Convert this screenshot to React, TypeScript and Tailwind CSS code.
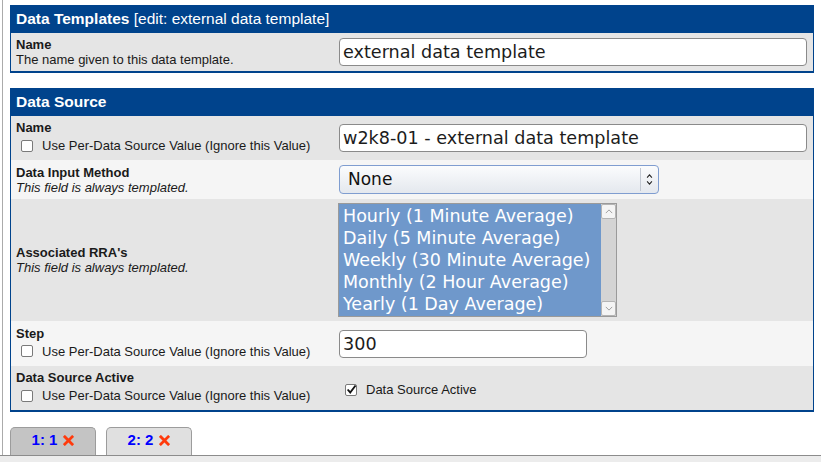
import React from "react";

const sans = "font-['Liberation_Sans',Arial,sans-serif]";
const deja = "font-['DejaVu_Sans',sans-serif]";

const Checkbox = ({ checked = false }: { checked?: boolean }) => (
  <span className="relative inline-block w-[12px] h-[12px] shrink-0 rounded-[2px] border border-[#7a7a7a] bg-white">
    {checked && (
      <svg
        viewBox="0 0 12 12"
        className="absolute left-[0px] top-[-1px] w-[11px] h-[11px]"
      >
        <path
          d="M1.8 6 L4.6 9.2 L10.4 1.6"
          fill="none"
          stroke="#111"
          strokeWidth="2"
        />
      </svg>
    )}
  </span>
);

const PerSource = () => (
  <div className="flex items-center h-[21px] pl-[5px] gap-[9px]">
    <Checkbox />
    <span>Use Per-Data Source Value (Ignore this Value)</span>
  </div>
);

const TextBox = ({ value, w }: { value: string; w: string }) => (
  <input
    readOnly
    defaultValue={value}
    className={`${w} ${deja} h-[28px] rounded-[4px] border border-[#8a8a8a] bg-white px-[3px] text-[17.6px] text-[#1c1c1c] outline-none`}
  />
);

const Header = ({ children }: { children: React.ReactNode }) => (
  <div className="h-[28px] bg-[#00438c] text-white text-[15.5px] pl-[5px] flex items-center">
    {children}
  </div>
);

const Row = ({
  h,
  light,
  label,
  children,
}: {
  h: string;
  light?: boolean;
  label: React.ReactNode;
  children: React.ReactNode;
}) => (
  <div className={`${h} flex items-center ${light ? "bg-[#f5f5f5]" : "bg-[#e5e5e5]"}`}>
    <div className="w-[328px] pl-[5px] leading-[15px]">{label}</div>
    <div className="flex-1 flex items-center">{children}</div>
  </div>
);

const Chevron = ({ up }: { up?: boolean }) => (
  <svg viewBox="0 0 10 6" className="w-[8px] h-[5px]">
    <path
      d={up ? "M1 5 L5 1 L9 5" : "M1 1 L5 5 L9 1"}
      fill="none"
      stroke="#8a8a8a"
      strokeWidth="1"
    />
  </svg>
);

const rras = [
  "Hourly (1 Minute Average)",
  "Daily (5 Minute Average)",
  "Weekly (30 Minute Average)",
  "Monthly (2 Hour Average)",
  "Yearly (1 Day Average)",
];

const RedX = () => (
  <svg viewBox="0 0 12 12" className="w-[11px] h-[11px]">
    <path d="M2 2 L10 10 M10 2 L2 10" stroke="#ff3a0c" strokeWidth="3" strokeLinecap="square" />
  </svg>
);

const Tab = ({ label, active }: { label: string; active?: boolean }) => (
  <div
    className={`w-[86px] h-[28px] rounded-t-[5px] border border-b-0 border-[#9c9c9c] flex items-center justify-center gap-[6px] pb-[2px] ${
      active ? "bg-[#c4c4c4]" : "bg-[#e0e0e0]"
    }`}
  >
    <span className="text-[15px] font-bold text-[#0000ff]">{label}</span>
    <RedX />
  </div>
);

export default function App() {
  return (
    <div className={`${sans} w-[821px] h-[462px] bg-white flex flex-col overflow-hidden text-[13px] text-[#1a1a1a]`}>
      <div className="h-[455px] ml-[2px] border-l border-[#ababab] pl-[7px] pt-[5px]">
        {/* Data template box */}
        <div className="w-[804px] border-x border-b-2 border-[#00438c]">
          <Header>
            <b>Data Templates</b>&nbsp;[edit: external data template]
          </Header>
          <Row
            h="h-[38px]"
            label={
              <>
                <div className="font-bold">Name</div>
                <div>The name given to this data template.</div>
              </>
            }
          >
            <TextBox value="external data template" w="w-[468px]" />
          </Row>
        </div>

        {/* Data source box */}
        <div className="w-[804px] mt-[15px] border-x border-b-2 border-[#00438c]">
          <Header>
            <b>Data Source</b>
          </Header>
          <Row
            h="h-[44px]"
            label={
              <>
                <div className="font-bold">Name</div>
                <PerSource />
              </>
            }
          >
            <TextBox value="w2k8-01 - external data template" w="w-[468px]" />
          </Row>
          <Row
            h="h-[39px]"
            light
            label={
              <>
                <div className="font-bold">Data Input Method</div>
                <div className="italic">This field is always templated.</div>
              </>
            }
          >
            <div className="w-[320px] h-[29px] rounded-[4px] border border-[#7f9dd0] bg-linear-to-b from-[#fbfcfd] to-[#e4e8ee] flex items-center">
              <span className={`${deja} flex-1 pl-[8px] text-[17px] text-[#111]`}>None</span>
              <div className="w-[18px] h-[23px] border-l border-[#c2c8d2] flex flex-col items-center justify-center gap-[3px]">
                <svg viewBox="0 0 8 5" className="w-[7px] h-[4px]">
                  <path d="M1 4.5 L4 1 L7 4.5" fill="none" stroke="#222" strokeWidth="1.3" />
                </svg>
                <svg viewBox="0 0 8 5" className="w-[7px] h-[4px]">
                  <path d="M1 0.5 L4 4 L7 0.5" fill="none" stroke="#222" strokeWidth="1.3" />
                </svg>
              </div>
            </div>
          </Row>
          <Row
            h="h-[122px]"
            label={
              <>
                <div className="font-bold">Associated RRA's</div>
                <div className="italic">This field is always templated.</div>
              </>
            }
          >
            <div className="ml-[-1px] w-[279px] h-[114px] border border-[#9a9a9a] flex bg-[#6f98cb]">
              <div className={`${deja} flex-1 pt-[1px] pl-[4px] text-[17.5px] leading-[22px] text-white whitespace-nowrap`}>
                {rras.map((r) => (
                  <div key={r}>{r}</div>
                ))}
              </div>
              <div className="w-[15px] bg-[#d4d4d4] flex flex-col justify-between">
                <div className="h-[15px] bg-[#f4f4f4] border border-[#b4b4b4] rounded-[2px] flex items-center justify-center">
                  <Chevron up />
                </div>
                <div className="h-[15px] bg-[#f4f4f4] border border-[#b4b4b4] rounded-[2px] flex items-center justify-center">
                  <Chevron />
                </div>
              </div>
            </div>
          </Row>
          <Row
            h="h-[45px]"
            light
            label={
              <>
                <div className="font-bold">Step</div>
                <PerSource />
              </>
            }
          >
            <TextBox value="300" w="w-[248px]" />
          </Row>
          <Row
            h="h-[44px]"
            label={
              <>
                <div className="font-bold">Data Source Active</div>
                <PerSource />
              </>
            }
          >
            <div className="flex items-center gap-[9px] pl-[6px] pt-[3px]">
              <Checkbox checked />
              <span>Data Source Active</span>
            </div>
          </Row>
        </div>

        {/* tabs */}
        <div className="flex gap-[10px] mt-[15px]">
          <Tab label="1: 1" active />
          <Tab label="2: 2" />
        </div>
      </div>
      <div className="flex-1 border-t border-[#8c8c8c] bg-[#ececec]" />
    </div>
  );
}
